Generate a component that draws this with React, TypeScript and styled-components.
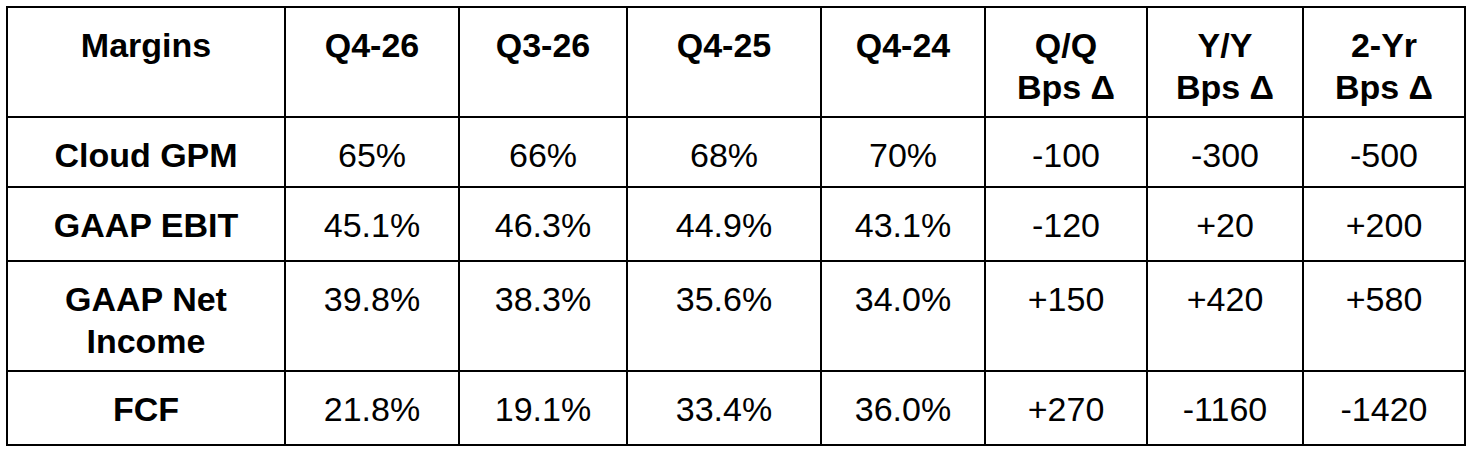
import React from 'react';
import styled, { createGlobalStyle } from 'styled-components';

const GlobalStyle = createGlobalStyle`
  html, body {
    margin: 0;
    padding: 0;
    background: #ffffff;
  }
`;

const Page = styled.div`
  padding: 6px;
  font-family: "Liberation Sans", Arial, Helvetica, sans-serif;
  color: #000000;
`;

const Table = styled.div`
  display: grid;
  grid-template-columns: 278px 174px 168px 194px 164px 162px 156px 162px;
  grid-template-rows: 110px 70px 74px 110px 74px;
  width: max-content;
  border-top: 2px solid #000;
  border-left: 2px solid #000;
`;

const Cell = styled.div<{ $bold?: boolean }>`
  box-sizing: border-box;
  border-right: 2px solid #000;
  border-bottom: 2px solid #000;
  padding: 17px 8px 0;
  text-align: center;
  font-size: 34px;
  line-height: 41.5px;
  font-weight: ${(p) => (p.$bold ? 700 : 400)};
`;

const headers = [
  ['Margins'],
  ['Q4-26'],
  ['Q3-26'],
  ['Q4-25'],
  ['Q4-24'],
  ['Q/Q', 'Bps Δ'],
  ['Y/Y', 'Bps Δ'],
  ['2-Yr', 'Bps Δ'],
];

const rows: { label: string[]; values: string[] }[] = [
  { label: ['Cloud GPM'], values: ['65%', '66%', '68%', '70%', '-100', '-300', '-500'] },
  { label: ['GAAP EBIT'], values: ['45.1%', '46.3%', '44.9%', '43.1%', '-120', '+20', '+200'] },
  { label: ['GAAP Net', 'Income'], values: ['39.8%', '38.3%', '35.6%', '34.0%', '+150', '+420', '+580'] },
  { label: ['FCF'], values: ['21.8%', '19.1%', '33.4%', '36.0%', '+270', '-1160', '-1420'] },
];

const Lines = ({ lines }: { lines: string[] }) => (
  <>
    {lines.map((l, i) => (
      <React.Fragment key={i}>
        {i > 0 && <br />}
        {l}
      </React.Fragment>
    ))}
  </>
);

export default function App() {
  return (
    <Page>
      <GlobalStyle />
      <Table>
        {headers.map((h, i) => (
          <Cell key={'h' + i} $bold>
            <Lines lines={h} />
          </Cell>
        ))}
        {rows.map((row, r) => (
          <React.Fragment key={r}>
            <Cell $bold>
              <Lines lines={row.label} />
            </Cell>
            {row.values.map((v, c) => (
              <Cell key={c}>{v}</Cell>
            ))}
          </React.Fragment>
        ))}
      </Table>
    </Page>
  );
}
